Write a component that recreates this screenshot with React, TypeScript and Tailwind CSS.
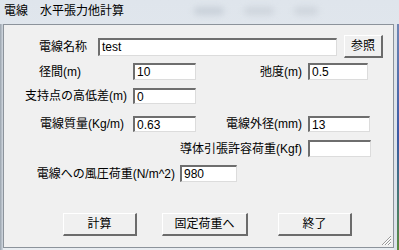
import React from "react"

const font = { fontFamily: '"Liberation Sans", "Noto Sans CJK JP", sans-serif' }

function Field({ value = "", w, h = 17 }: { value?: string; w: number; h?: number }) {
  return (
    <div
      className="bg-white border-t-2 border-l-2 border-t-[#6e6e6e] border-l-[#6e6e6e] border-b border-r border-b-[#dcdcdc] border-r-[#dcdcdc] text-[12px] leading-none text-black pl-[2px] flex items-center overflow-hidden"
      style={{ width: w, height: h }}
    >
      {value}
    </div>
  )
}

function Btn({ label, w, h = 23 }: { label: string; w: number; h?: number }) {
  return (
    <div
      className="flex items-center justify-center bg-[#f0f0f0] border-t border-l border-t-white border-l-white border-b-2 border-r-2 border-b-[#6b6b6b] border-r-[#6b6b6b] text-[12px] text-black"
      style={{ width: w, height: h }}
    >
      {label}
    </div>
  )
}

function Label({ text, w, pr }: { text: string; w: number; pr: number }) {
  return (
    <div className="shrink-0 text-right text-[12px] leading-none text-black whitespace-nowrap" style={{ width: w, paddingRight: pr }}>
      {text}
    </div>
  )
}

export default function App() {
  return (
    <div className="w-[399px] h-[250px] overflow-hidden relative bg-gradient-to-b from-[#dfe5ec] to-[#e9edf1]" style={font}>
      {/* Title bar */}
      <div className="h-[24px] flex items-center pl-[4px] pb-[2px] text-[12px] text-black">
        電線　水平張力他計算
        <div className="ml-[70px] flex gap-[20px] opacity-60">
          <div className="w-[30px] h-[8px] rounded-full bg-[#b9c2cc] blur-[3px]" />
          <div className="w-[30px] h-[8px] rounded-full bg-[#c3cad2] blur-[3px]" />
          <div className="w-[24px] h-[8px] rounded-full bg-[#c3cad2] blur-[3px]" />
        </div>
      </div>

      <div className="flex h-[226px]">
        {/* left frame */}
        <div className="w-[3px] bg-gradient-to-r from-[#9aa3ad] to-[#d3dae2]" />

        {/* Client area */}
        <div className="w-[391px] h-[224px] bg-[#f0f0f0] border border-[#8c939b] flex flex-col relative">
          {/* row 1 */}
          <div className="flex items-center mt-[10px] h-[23px]">
            <Label text="電線名称" w={94} pr={11} />
            <Field value="test" w={239} h={18} />
            <div className="ml-[7px]">
              <Btn label="参照" w={39} />
            </div>
          </div>

          {/* row 2 */}
          <div className="flex items-center mt-[5px] h-[17px]">
            <Label text="径間(m)" w={129} pr={52} />
            <Field value="10" w={63} />
            <Label text="弛度(m)" w={112} pr={6} />
            <Field value="0.5" w={60} />
          </div>

          {/* row 3 */}
          <div className="flex items-center mt-[8px] h-[16px]">
            <Label text="支持点の高低差(m)" w={129} pr={6} />
            <Field value="0" w={63} h={16} />
          </div>

          {/* row 4 */}
          <div className="flex items-center mt-[12px] h-[16px]">
            <Label text="電線質量(Kg/m)" w={129} pr={9} />
            <Field value="0.63" w={63} h={16} />
            <Label text="電線外径(mm)" w={112} pr={6} />
            <Field value="13" w={62} h={16} />
          </div>

          {/* row 5 */}
          <div className="flex items-center mt-[8px] h-[17px]">
            <Label text="導体引張許容荷重(Kgf)" w={304} pr={6} />
            <Field w={63} />
          </div>

          {/* row 6 */}
          <div className="flex items-center mt-[8px] h-[17px]">
            <Label text="電線への風圧荷重(N/m^2)" w={176} pr={5} />
            <Field value="980" w={57} />
          </div>

          {/* buttons */}
          <div className="flex items-center mt-[31px] ml-[59px] gap-[25px]">
            <Btn label="計算" w={74} />
            <Btn label="固定荷重へ" w={86} />
            <div className="ml-[5px]">
              <Btn label="終了" w={74} />
            </div>
          </div>

          {/* resize grip */}
          <svg className="absolute right-[1px] bottom-[1px]" width="11" height="11" viewBox="0 0 11 11">
            <path d="M10 1 L1 10 M10 4 L4 10 M10 7 L7 10" stroke="#9a9a9a" strokeWidth="1" />
            <path d="M10 2 L2 10 M10 5 L5 10 M10 8 L8 10" stroke="#ffffff" strokeWidth="1" />
          </svg>
        </div>

        {/* right frame */}
        <div className="w-[3px] bg-[#dde3ea]" />
        <div className="w-[2px] bg-gradient-to-b from-[#6f86b4] via-[#3a58a4] to-[#5a8a3c]" />
      </div>
    </div>
  )
}
